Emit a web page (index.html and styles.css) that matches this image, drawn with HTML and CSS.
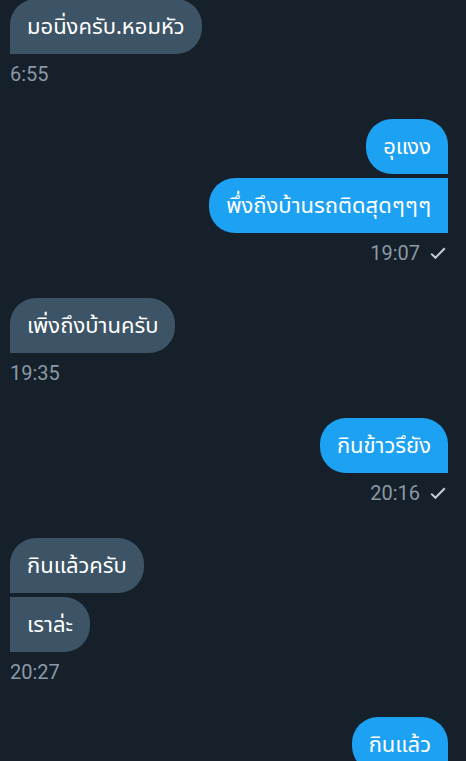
FILE: index.html
```html
<!DOCTYPE html>
<html lang="th">
<head>
<meta charset="utf-8">
<link rel="stylesheet" href="styles.css">
</head>
<body>
<div class="chat">
  <div class="group in">
    <div class="bubble first">มอนิ่งครับ.หอมหัว</div>
    <div class="time">6:55</div>
  </div>
  <div class="group out">
    <div class="bubble first">อุแงง</div>
    <div class="bubble">พึ่งถึงบ้านรถติดสุดๆๆๆ</div>
    <div class="time">19:07 <svg class="check" width="16" height="13" viewBox="0 0 16 13"><path d="M1.2 6.6 L5.4 10.8 L14.8 1.2" fill="none" stroke="currentColor" stroke-width="2"/></svg></div>
  </div>
  <div class="group in">
    <div class="bubble first">เพิ่งถึงบ้านครับ</div>
    <div class="time">19:35</div>
  </div>
  <div class="group out">
    <div class="bubble first">กินข้าวรึยัง</div>
    <div class="time">20:16 <svg class="check" width="16" height="13" viewBox="0 0 16 13"><path d="M1.2 6.6 L5.4 10.8 L14.8 1.2" fill="none" stroke="currentColor" stroke-width="2"/></svg></div>
  </div>
  <div class="group in">
    <div class="bubble first">กินแล้วครับ</div>
    <div class="bubble">เราล่ะ</div>
    <div class="time">20:27</div>
  </div>
  <div class="group out">
    <div class="bubble first">กินแล้ว</div>
  </div>
</div>
</body>
</html>
```
FILE: styles.css
```css
html, body {
  margin: 0;
  padding: 0;
  background: #15202b;
}
body {
  width: 466px;
  height: 761px;
  overflow: hidden;
  font-family: "Noto Sans Thai", "Noto Sans", Roboto, sans-serif;
}
.chat {
  display: flex;
  flex-direction: column;
  margin-top: -1px;
  padding: 0 18px 0 10px;
}
.group {
  display: flex;
  flex-direction: column;
  gap: 4px;
}
.group.in { align-items: flex-start; }
.group.out { align-items: flex-end; }
.bubble {
  box-sizing: border-box;
  height: 55px;
  display: flex;
  align-items: center;
  color: #ffffff;
  font-size: 22px;
  padding: 2px 17px 0;
  white-space: nowrap;
}
.in .bubble {
  background: #3d5466;
  border-radius: 0 26px 26px 0;
}
.in .bubble.first { border-top-left-radius: 26px; }
.out .bubble {
  background: #1da1f2;
  border-radius: 26px 0 0 26px;
}
.out .bubble.first { border-top-right-radius: 26px; }
.time {
  font-family: Roboto, "Noto Sans", sans-serif;
  font-size: 20px;
  line-height: 24px;
  height: 24px;
  color: #8b98a5;
  margin-top: 4px;
  margin-bottom: 33px;
  display: flex;
  align-items: center;
  gap: 10px;
}
.out .time { margin-right: 2px; }
.check { color: #c6ced5; }
```
